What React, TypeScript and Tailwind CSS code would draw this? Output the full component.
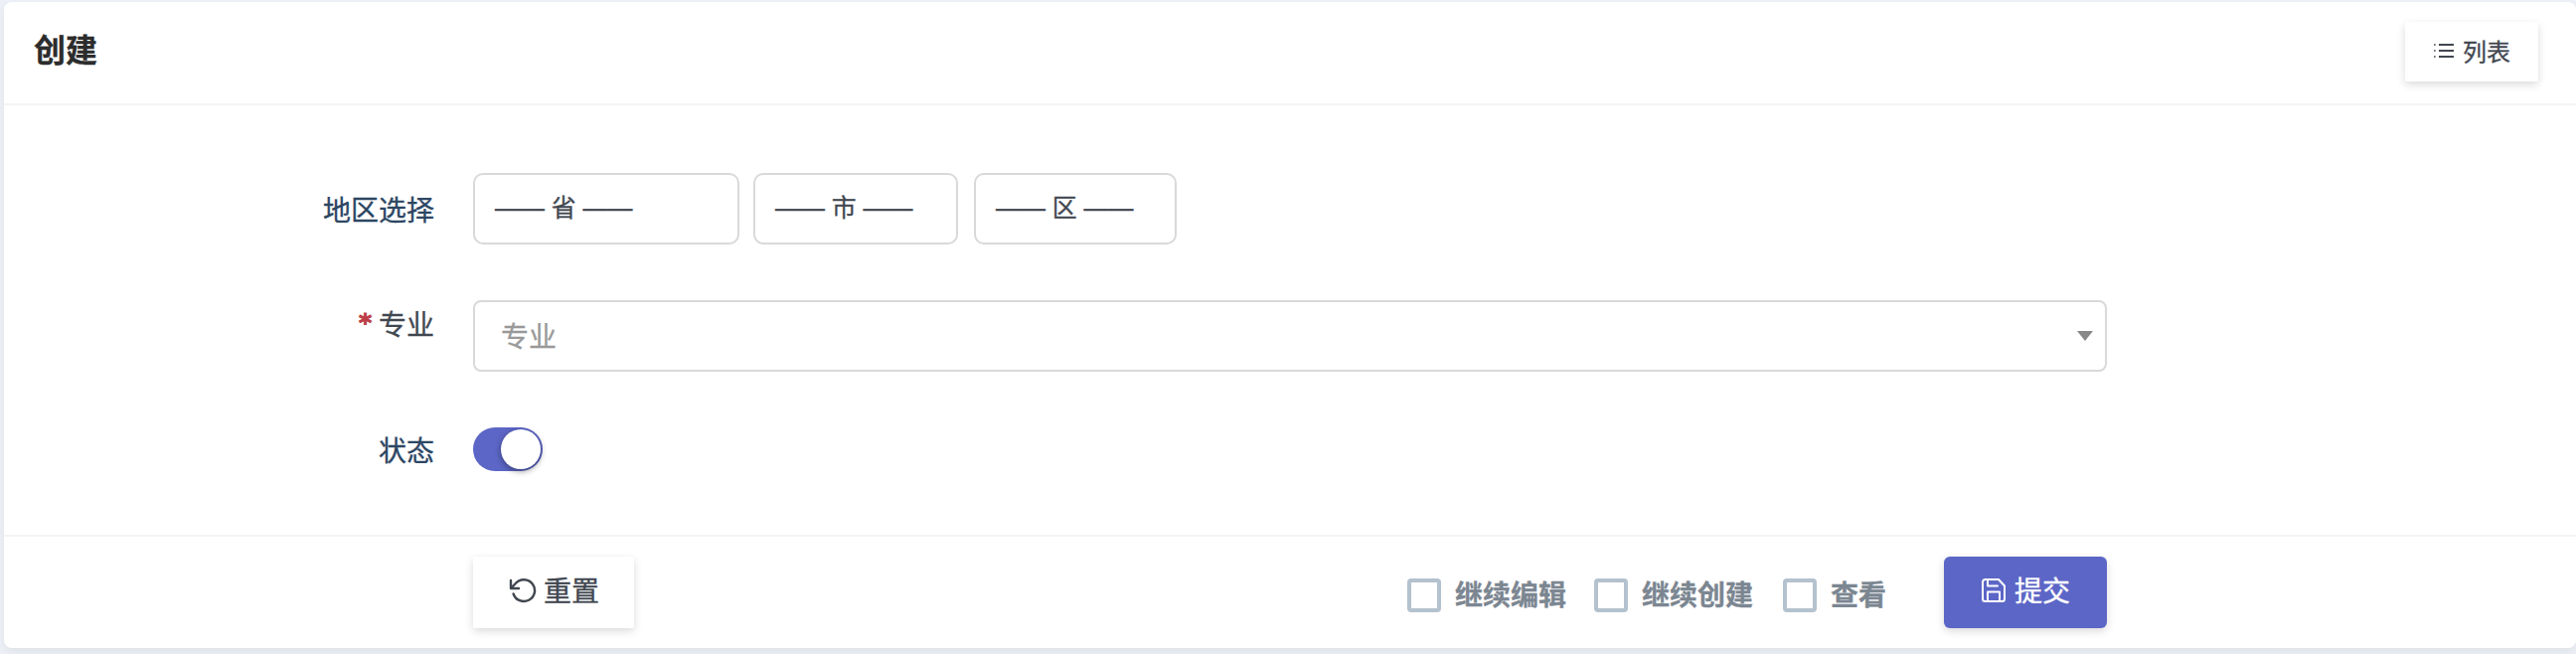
import React from "react";

function ListIcon() {
  return (
    <svg width="21" height="16" viewBox="0 0 21 16" fill="none" className="block shrink-0 stroke-[#414750]">
      <path d="M6 2H21M6 8H21M6 14H21" strokeWidth="2" />
      <path d="M1 2H2.6M1 8H2.6M1 14H2.6" strokeWidth="1.6" />
    </svg>
  );
}

function ResetIcon() {
  return (
    <svg width="28" height="26" viewBox="0 0 28 26" fill="none" className="block shrink-0 stroke-[#414750]" strokeWidth="2.4" strokeLinecap="round" strokeLinejoin="round">
      <path d="M2 3V11H10" />
      <path d="M2.6 10.4L7 5.7A11 10.9 0 1 1 4.6 16.5" />
    </svg>
  );
}

function SaveIcon() {
  return (
    <svg width="24" height="24" viewBox="0 0 24 24" fill="none" className="block shrink-0 stroke-white" strokeWidth="2" strokeLinecap="round" strokeLinejoin="round">
      <path d="M20.5 23H3.5A2.5 2.5 0 0 1 1 20.5V3.5A2.5 2.5 0 0 1 3.5 1H17L23 7.5V20.5A2.5 2.5 0 0 1 20.5 23Z" />
      <path d="M18 23V13.5H6V23M6 1V7.5H16" />
    </svg>
  );
}

function Picker({ name, className }: { name: string; className: string }) {
  return (
    <div className={`flex h-[72px] items-center rounded-[10px] border-2 border-[#d9d9d9] pb-[2px] pl-5 font-['Liberation_Sans','Noto_Sans_CJK_SC',sans-serif] text-[24.9px] leading-none text-[#414750] ${className}`}>
      —— {name} ——
    </div>
  );
}

function Check({ label, className }: { label: string; className?: string }) {
  return (
    <label className={`flex h-[34px] items-center ${className ?? ""}`}>
      <span className="size-[34px] rounded-[4px] border-4 border-[#b4c1ce]" />
      <span className="ml-[14px] pb-[4px] text-[28px] leading-[34px] font-bold text-[#7b8691]">{label}</span>
    </label>
  );
}

export default function App() {
  return (
    <div className="h-[658px] w-[2592px] overflow-hidden bg-[#edf0f6] pt-[2px] pl-1 font-['Noto_Sans_CJK_SC',sans-serif] [-webkit-text-stroke:0.3px]">
      <section className="flex h-[650px] flex-col rounded-[8px] bg-white shadow-[0_4px_8px_rgba(0,0,0,0.06)]">
        <header className="flex h-[104px] items-start justify-between border-b-2 border-[#f3f4f4] pr-[38px] pl-[30px]">
          <h1 className="mt-[22px] text-[32px] leading-[48px] font-bold text-[#2c2c2c]">创建</h1>
          <button className="mt-5 flex h-[60px] w-[134px] items-center rounded-[2px] bg-white pb-[3px] pl-7 text-[24px] leading-none text-[#414750] shadow-[0_3px_8px_rgba(0,0,0,0.15)]">
            <ListIcon />
            <span className="ml-[9px]">列表</span>
          </button>
        </header>

        <div className="flex h-[434px] flex-col border-b-2 border-[#f3f4f4] pt-[68px]">
          <div className="flex h-32">
            <div className="w-[433px] pt-[15px] text-right text-[28px] leading-[42px] text-[#2c4663]">地区选择</div>
            <div className="ml-[39px] flex">
              <Picker name="省" className="w-[268px]" />
              <Picker name="市" className="ml-[14px] w-[206px]" />
              <Picker name="区" className="ml-4 w-[204px]" />
            </div>
          </div>
          <div className="flex h-32">
            <div className="flex h-[44px] w-[433px] justify-end pt-[2px] text-[28px] leading-[42px] text-[#414750]">
              <span className="mr-[7px] font-['DejaVu_Sans',sans-serif] text-[25px] leading-[42px] font-bold text-[#bd3d47] [-webkit-text-stroke:1px]">*</span>
              <span>专业</span>
            </div>
            <div className="ml-[39px] flex h-[72px] w-[1644px] items-center justify-between rounded-[8px] border-2 border-[#d9d9d9] pr-3 pl-[26px] text-[28px] leading-none text-[#999]">
              <span className="pb-[3px]">专业</span>
              <svg width="16" height="10" className="block fill-[#888]"><path d="M0 0H16L8 10Z" /></svg>
            </div>
          </div>
          <div className="flex">
            <div className="w-[433px] pt-[1px] text-right text-[28px] leading-[42px] text-[#2c4663]">状态</div>
            <div className="ml-[39px] flex h-11 w-[70px] items-center justify-end rounded-full bg-[#5c66c6] pr-[2px]">
              <span className="size-10 rounded-full bg-white shadow-[0_2px_6px_rgba(0,0,0,0.4)]" />
            </div>
          </div>
        </div>

        <footer className="flex items-start justify-between pt-5 pr-[472px] pl-[472px]">
          <button className="flex h-[72px] w-[162px] items-center rounded-[2px] bg-white pb-[5px] pl-[36px] text-[28px] leading-none text-[#414750] shadow-[0_3px_8px_rgba(0,0,0,0.15)]">
            <ResetIcon />
            <span className="ml-[7px] pb-[2px]">重置</span>
          </button>
          <div className="flex">
            <div className="flex pt-[22px]">
              <Check label="继续编辑" />
              <Check label="继续创建" className="ml-7" />
              <Check label="查看" className="ml-[30px]" />
            </div>
            <button className="ml-[58px] flex h-[72px] w-[164px] items-center rounded-[6px] bg-[#5c66c6] pb-[5px] pl-[38px] text-[28px] leading-none text-white shadow-[0_3px_8px_rgba(0,0,0,0.15)]">
              <SaveIcon />
              <span className="ml-[9px] pb-[2px]">提交</span>
            </button>
          </div>
        </footer>
      </section>
    </div>
  );
}
